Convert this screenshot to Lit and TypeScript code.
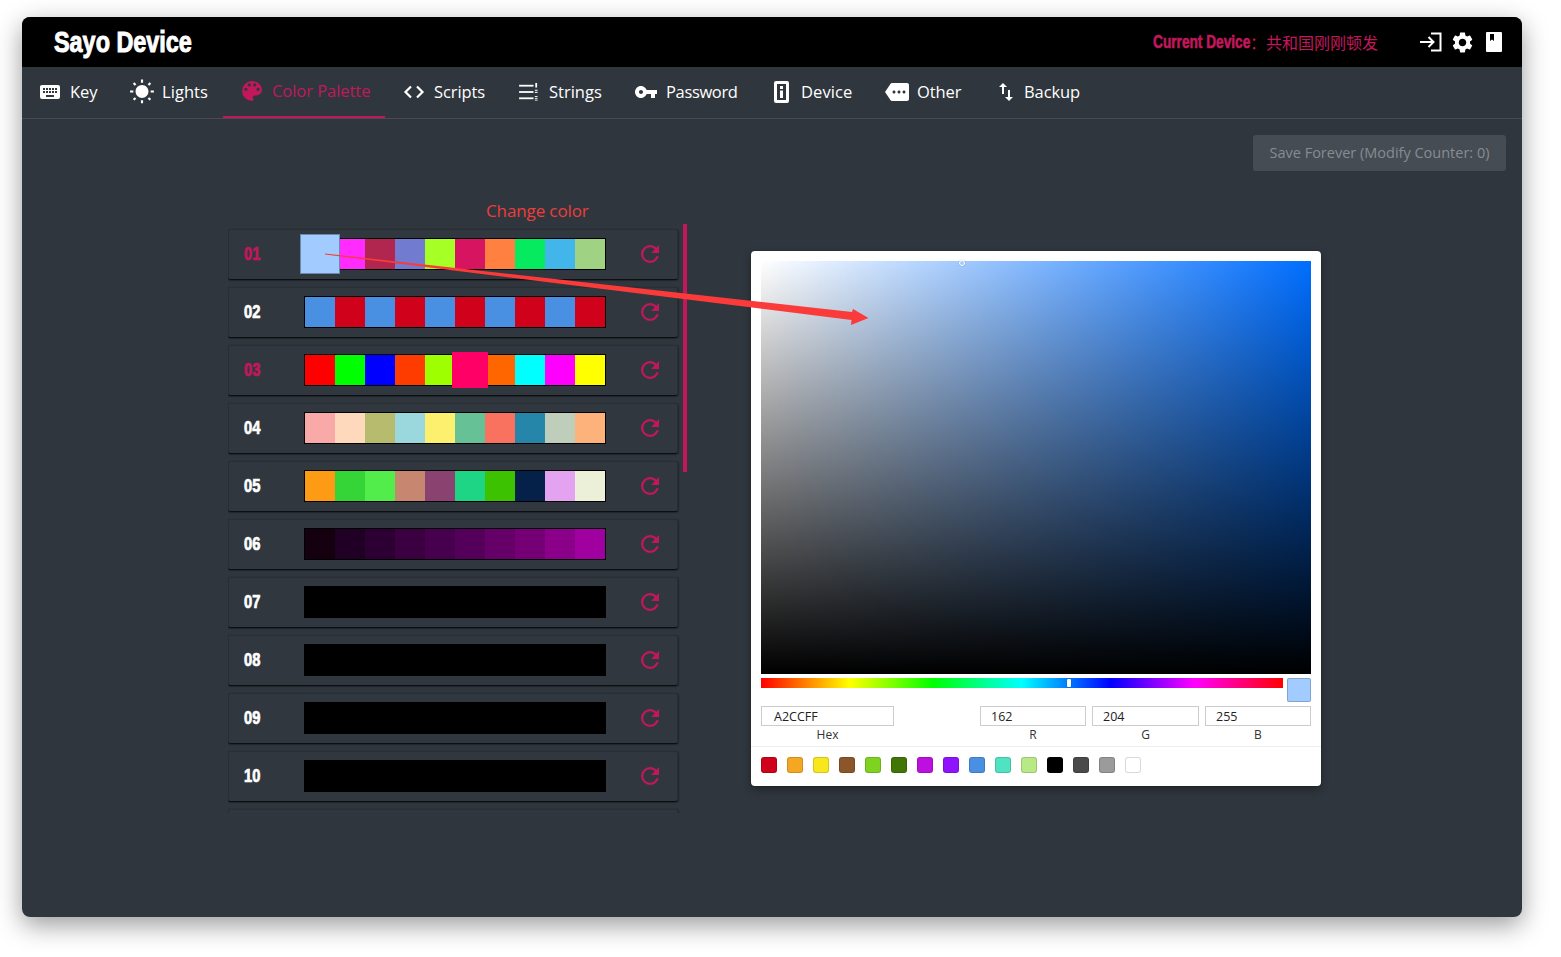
import { LitElement, html, css } from "lit";
import { customElement } from "lit/decorators.js";

const ic = (d: string, w: number, h: number, vb = "0 0 24 24") =>
  html`<svg class="ico" width=${w} height=${h} viewBox=${vb} fill="currentColor"><path fill-rule="evenodd" d=${d}></path></svg>`;

const ICONS: Record<string, any> = {
  key: ic("M19,10H17V8H19M19,13H17V11H19M16,10H14V8H16M16,13H14V11H16M16,17H8V15H16M7,10H5V8H7M7,13H5V11H7M8,11H10V13H8M8,8H10V10H8M11,11H13V13H11M11,8H13V10H11M20,5H4C2.89,5 2,5.89 2,7V17A2,2 0 0,0 4,19H20A2,2 0 0,0 22,17V7C22,5.89 21.1,5 20,5Z", 24, 24),
  sun: ic("M3.55,18.54L4.96,19.95L6.76,18.16L5.34,16.76M11,22.45C11.32,22.45 13,22.45 13,22.45V19.5H11M12,5.5A6,6 0 0,0 6,11.5A6,6 0 0,0 12,17.5A6,6 0 0,0 18,11.5C18,8.18 15.31,5.5 12,5.5M20,12.5H23V10.5H20M17.24,18.16L19.04,19.95L20.45,18.54L18.66,16.74M20.45,4.46L19.04,3.05L17.24,4.84L18.66,6.26M13,0.55H11V3.5H13M4,10.5H1V12.5H4M6.76,4.84L4.96,3.05L3.55,4.46L5.34,6.26L6.76,4.84Z", 26, 26),
  palette: ic("M17.5,12A1.5,1.5 0 0,1 16,10.5A1.5,1.5 0 0,1 17.5,9A1.5,1.5 0 0,1 19,10.5A1.5,1.5 0 0,1 17.5,12M14.5,8A1.5,1.5 0 0,1 13,6.5A1.5,1.5 0 0,1 14.5,5A1.5,1.5 0 0,1 16,6.5A1.5,1.5 0 0,1 14.5,8M9.5,8A1.5,1.5 0 0,1 8,6.5A1.5,1.5 0 0,1 9.5,5A1.5,1.5 0 0,1 11,6.5A1.5,1.5 0 0,1 9.5,8M6.5,12A1.5,1.5 0 0,1 5,10.5A1.5,1.5 0 0,1 6.5,9A1.5,1.5 0 0,1 8,10.5A1.5,1.5 0 0,1 6.5,12M12,3A9,9 0 0,0 3,12A9,9 0 0,0 12,21A1.5,1.5 0 0,0 13.5,19.5C13.5,19.11 13.35,18.76 13.11,18.5C12.88,18.23 12.73,17.88 12.73,17.5A1.5,1.5 0 0,1 14.23,16H16A5,5 0 0,0 21,11C21,6.58 16.97,3 12,3Z", 22, 22, "2 2 20 20"),
  code: html`<svg class="ico" width="22" height="16" viewBox="0 0 22 16" fill="none" stroke="currentColor" stroke-width="2.2"><path d="M8 2.5 2.5 8 8 13.5M14 2.5 19.5 8 14 13.5"></path></svg>`,
  strings: html`<svg class="ico" width="20" height="18" viewBox="0 0 22 20" fill="currentColor"><rect x="0" y="2" width="16" height="2"></rect><rect x="0" y="9" width="16" height="2"></rect><rect x="0" y="16" width="16" height="2"></rect><rect x="18" y="0" width="2" height="5"></rect><rect x="17.5" y="7.5" width="3" height="1.2"></rect><rect x="17.5" y="9.8" width="3" height="1.2"></rect><rect x="17.5" y="14.5" width="3" height="1"></rect><rect x="17.5" y="16.5" width="3" height="1"></rect><rect x="17.5" y="18.5" width="3" height="1"></rect></svg>`,
  pass: ic("M12.65 10C11.83 7.67 9.61 6 7 6c-3.31 0-6 2.69-6 6s2.69 6 6 6c2.61 0 4.83-1.67 5.65-4H17v4h4v-4h2v-4H12.65zM7 14c-1.1 0-2-.9-2-2s.9-2 2-2 2 .9 2 2-.9 2-2 2z", 24, 24, "0.5 0 23 24"),
  device: html`<svg class="ico" width="15" height="22" viewBox="0 0 15 22" fill="currentColor"><path fill-rule="evenodd" d="M2 0H13A2 2 0 0 1 15 2V20A2 2 0 0 1 13 22H2A2 2 0 0 1 0 20V2A2 2 0 0 1 2 0ZM3 3V19H12V3ZM6 5H9V8H6ZM6 9.500H9V17H6Z"></path></svg>`,
  other: ic("M22 3H7c-.69 0-1.23.35-1.59.88L0 12l5.41 8.11c.36.53.9.89 1.59.89h15c1.1 0 2-.9 2-2V5c0-1.1-.9-2-2-2zM9 13.5c-.83 0-1.5-.67-1.5-1.500s.67-1.5 1.5-1.5 1.5.67 1.5 1.5-.67 1.5-1.5 1.5zm5 0c-.83 0-1.5-.67-1.5-1.500s.67-1.5 1.5-1.5 1.5.67 1.5 1.5-.67 1.5-1.5 1.5zm5 0c-.83 0-1.5-.67-1.5-1.500s.67-1.5 1.5-1.5 1.5.67 1.5 1.5-.67 1.5-1.5 1.5z", 24, 24),
  backup: ic("M16 17.01V10h-2v7.01h-3L15 21l4-3.99h-3zM9 3L5 6.99h3V14h2V6.99h3L9 3z", 24, 24),
};

const TABS = [
  { id: "key", label: "Key", iconW: 20, gap: 10, w: 90, pad: 16, ls: -0.1 },
  { id: "sun", label: "Lights", iconW: 24, gap: 8, w: 109, pad: 16, ls: 0.05 },
  { id: "palette", label: "Color Palette", iconW: 20, gap: 10, w: 162, pad: 19, ls: -0.05 },
  { id: "code", label: "Scripts", iconW: 22, gap: 9, w: 118, pad: 18, ls: -0.1 },
  { id: "strings", label: "Strings", iconW: 20, gap: 10, w: 115, pad: 16, ls: 0 },
  { id: "pass", label: "Password", iconW: 23, gap: 9, w: 140, pad: 16, ls: -0.35 },
  { id: "device", label: "Device", iconW: 15, gap: 12, w: 111, pad: 16, ls: 0.1 },
  { id: "other", label: "Other", iconW: 24, gap: 8, w: 112, pad: 16, ls: -0.1 },
  { id: "backup", label: "Backup", iconW: 18, gap: 9, w: 120, pad: 16, ls: -0.1 },
].map((t, i) => ({ ...t, active: i === 2 }));

const BLACK = Array(10).fill("#000");
const ROWS: { colors: string[]; sel?: number; big?: boolean }[] = [
  { colors: ["#a2ccff", "#ff2bff", "#b0264f", "#717bd0", "#a6ff25", "#d6145f", "#ff8040", "#05ea5f", "#42b6ea", "#9fd283"], sel: 0, big: true },
  { colors: ["#4a90e2", "#d0021b", "#4a90e2", "#d0021b", "#4a90e2", "#d0021b", "#4a90e2", "#d0021b", "#4a90e2", "#d0021b"] },
  { colors: ["#ff0000", "#00ff00", "#0000ff", "#ff3c00", "#9dff00", "#ff0066", "#ff6600", "#00ffff", "#ff00ff", "#ffff00"], sel: 5 },
  { colors: ["#faa9a9", "#ffd9bc", "#b7bb6e", "#9ad8dd", "#fdf06e", "#66c296", "#f97260", "#2686aa", "#bfcebb", "#fdb27b"] },
  { colors: ["#fd9b14", "#36d537", "#53ed4b", "#c68670", "#8a4370", "#1ed585", "#3cc200", "#052149", "#e3a3f0", "#ecf0d8"] },
  { colors: ["#14000f", "#200025", "#2d0033", "#3a0040", "#47004d", "#54005a", "#640068", "#750075", "#8a0088", "#a000a0"] },
  { colors: BLACK }, { colors: BLACK }, { colors: BLACK }, { colors: BLACK },
];

const PRESETS = ["#d0021b", "#f5a623", "#f8e71c", "#8b572a", "#7ed321", "#417505", "#bd10e0", "#9013fe", "#4a90e2", "#50e3c2", "#b8e986", "#000000", "#4a4a4a", "#9b9b9b", "#ffffff"];

@customElement("app-root")
export class AppRoot extends LitElement {
  static styles = css`
    :host { display: block; padding: 17px 22px 40px; background: #fff; font-family: "Open Sans", "Noto Sans", sans-serif; --p: #c2185b; }
    .win { width: 1500px; height: 900px; border-radius: 8px; overflow: hidden; background: #2f363d; display: flex; flex-direction: column; }
    .shadow { width: 1500px; height: 900px; border-radius: 8px; box-shadow: 0 8px 26px rgba(0,0,0,.4); }
    .head { height: 50px; background: #000; display: flex; align-items: center; color: #fff; flex: none; }
    .logo { margin-left: 32px; font: bold 30px/1 "Liberation Sans", sans-serif; -webkit-text-stroke: 1px #fff; transform: scaleX(.78); transform-origin: left center; white-space: nowrap; }
    .cur { margin-left: auto; display: flex; align-items: center; color: var(--p); }
    .cur b { display: block; width: 97px; white-space: nowrap; font: bold 18px/1 "Liberation Sans", sans-serif; -webkit-text-stroke: .6px var(--p); transform: scaleX(.76); transform-origin: left center; }
    .cur span { font: 16px/1 "Noto Sans CJK SC", sans-serif; }
    .tools { display: flex; align-items: center; margin-left: 42px; margin-right: 20px; gap: 8px; }
    .book { margin-left: 3px; }
    .tabs { flex: none; display: flex; padding-left: 2px; border-bottom: 1px solid #484c50; box-sizing: border-box; height: 52px; color: #fff; }
    .tab { display: flex; align-items: center; flex: none; font-size: 16.500px; white-space: nowrap; height: 51px; padding-bottom: 2px; box-sizing: border-box; }
    .tab.on { color: var(--p); border-bottom: 2px solid var(--p); }
    .iconbox { display: flex; justify-content: center; align-items: center; }
    .ico { display: block; flex: none; }
    .body { flex: 1; position: relative; padding: 16px; min-height: 0; }
    .saverow { display: flex; justify-content: flex-end; }
    .save { height: 36px; width: 253px; padding-bottom: 2px; background: #454c53; color: #878c91; border-radius: 3px; font-size: 14.500px; display: flex; align-items: center; justify-content: center; white-space: nowrap; box-sizing: border-box; }
    .main { display: flex; margin: 53px 0 0 190px; align-items: flex-start; }
    .listwrap { position: relative; width: 460px; height: 589px; flex: none; }
    .list { height: 100%; overflow: hidden; padding-top: 5px; box-sizing: border-box; display: flex; flex-direction: column; gap: 8px; }
    .thumb { position: absolute; left: 455px; top: 0; width: 4px; height: 248px; background: var(--p); }
    .row { width: 450px; height: 50px; flex: none; box-sizing: border-box; display: flex; align-items: center; background: #30373e; box-shadow: 0 1px 2px #000, inset 0 1px 0 #292f35, inset 1px 0 0 #292f35, inset -1px 0 0 #292f35; border-radius: 2px; }
    .num { width: 76px; padding: 2px 0 0 16px; box-sizing: border-box; color: #fff; font: bold 17.500px/1 "Liberation Sans", sans-serif; -webkit-text-stroke: .7px currentColor; white-space: nowrap; }
    .num i { display: block; font-style: normal; transform: scaleX(.84); transform-origin: left center; }
    .num.on { color: var(--p); }
    .pal { display: flex; border: 1px solid #000; background: #000; flex: none; }
    .sw { width: 30px; height: 30px; flex: none; }
    .sw.sel { width: 36px; height: 36px; margin: -3px -3px; position: relative; z-index: 1; }
    .sw.big { width: 40px; height: 40px; margin: -5px -5px; box-sizing: border-box; border: 1.500px solid #6b89ab; position: relative; z-index: 1; }
    .reload { margin-left: 35px; color: var(--p); }
    .picker { margin: 27px 0 0 63px; width: 570px; height: 535px; background: #fff; border-radius: 4px; box-shadow: 0 0 2px rgba(0,0,0,.3), 0 4px 8px rgba(0,0,0,.3); color: #333; padding: 10px 10px 0; box-sizing: border-box; position: relative; flex: none; }
    .sat { height: 413px; position: relative; background: linear-gradient(to top, #000, rgba(0,0,0,0)), linear-gradient(to right, #fff, rgba(255,255,255,0)), #006eff; }
    .cursor { position: absolute; left: 198px; top: -1px; width: 6px; height: 6px; border-radius: 50%; box-sizing: border-box; border: 1px solid #fff; box-shadow: 0 0 1px rgba(0,0,0,.5); }
    .hue-row { display: flex; gap: 4px; margin-top: 4px; }
    .hue { width: 522px; height: 10px; position: relative; background: linear-gradient(to right, #f00 0%, #ff0 17%, #0f0 33%, #0ff 50%, #00f 67%, #f0f 83%, #f00 100%); }
    .hthumb { position: absolute; left: 306px; top: 1px; width: 4px; height: 8px; background: #fff; border-radius: 1px; box-shadow: 0 0 1px rgba(0,0,0,.6); }
    .prev { width: 24px; height: 24px; background: #a2ccff; border-radius: 2px; box-sizing: border-box; border: 1px solid rgba(0,0,0,.2); }
    .fields { display: flex; margin-top: 4px; }
    .f { display: flex; flex-direction: column; align-items: center; flex: none; }
    .f .inp { box-sizing: border-box; height: 20px; width: 100%; border: 1px solid #ccc; font-size: 12.500px; line-height: 20px; padding-left: 10px; color: #222; }
    .f .inp.hex { padding-left: 12px; }
    .f .lab { font-size: 12px; line-height: 14px; margin-top: 2px; color: #333; }
    .rule { height: 1px; background: #eee; margin: 4px -10px 0; }
    .presets { display: flex; gap: 10px; padding-top: 10px; }
    .pre { width: 16px; height: 16px; border-radius: 3px; box-sizing: border-box; border: 1px solid rgba(0,0,0,.15); }
    .anno { position: absolute; left: 0; top: 0; pointer-events: none; overflow: visible; z-index: 2; }
    .chg { position: absolute; left: 464px; top: 80px; color: #f03c3c; font-size: 17px; letter-spacing: -.12px; line-height: 24px; }
  `;

  render() {
    return html`
      <div class="shadow"><div class="win">
        <div class="head">
          <div class="logo">Sayo Device</div>
          <div class="cur"><b>Current Device</b><span>：</span><span>共和国刚刚顿发</span></div>
          <div class="tools">
            <svg class="ico" width="22" height="20" viewBox="0 0 22 20" fill="none" stroke="#fff" stroke-width="2"><path d="M0 10H13M8.500 5 13.500 10 8.500 15M11 1.500H20.500V18.500H11"></path></svg>
            <svg class="ico" width="25" height="25" viewBox="0 0 24 24" fill="#fff"><path fill-rule="evenodd" d="M19.14 12.94c.04-.3.06-.61.06-.94 0-.32-.02-.64-.07-.94l2.03-1.58c.18-.14.23-.41.12-.61l-1.92-3.32c-.12-.22-.37-.29-.59-.22l-2.39.96c-.5-.38-1.03-.7-1.62-.94l-.36-2.54c-.04-.24-.24-.41-.48-.41h-3.84c-.24 0-.43.17-.47.41l-.36 2.54c-.59.24-1.13.57-1.62.94l-2.39-.96c-.22-.08-.47 0-.59.22L2.74 8.87c-.12.21-.08.47.12.61l2.03 1.58c-.05.3-.09.63-.09.94s.02.64.07.94l-2.03 1.58c-.18.14-.23.41-.12.61l1.92 3.32c.12.22.37.29.59.22l2.39-.96c.5.38 1.03.7 1.62.94l.36 2.54c.05.24.24.41.48.41h3.84c.24 0 .44-.17.47-.41l.36-2.54c.59-.24 1.13-.56 1.62-.94l2.39.96c.22.08.47 0 .59-.22l1.92-3.32c.12-.22.07-.47-.12-.61l-2.01-1.58zM12 15.6c-1.98 0-3.6-1.62-3.6-3.6s1.62-3.6 3.6-3.6 3.6 1.62 3.6 3.6-1.62 3.6-3.6 3.6z"></path></svg>
            <svg class="ico book" width="16" height="20" viewBox="0 0 16 20" fill="#fff"><path fill-rule="evenodd" d="M1 0H15A1 1 0 0 1 16 1V19A1 1 0 0 1 15 20H1A1 1 0 0 1 0 19V1A1 1 0 0 1 1 0ZM4 2V9L6 7.500 8 9V2Z"></path></svg>
          </div>
        </div>
        <div class="tabs">
          ${TABS.map(t => html`<div class="tab ${t.active ? "on" : ""}" style="width:${t.w}px;padding-left:${t.pad}px;letter-spacing:${t.ls}px">
            <span class="iconbox" style="width:${t.iconW}px;margin-right:${t.gap}px">${ICONS[t.id]}</span>${t.label}
          </div>`)}
        </div>
        <div class="body">
          <div class="saverow"><div class="save">Save Forever (Modify Counter: 0)</div></div>
          <div class="main">
            <div class="listwrap">
              <div class="list">
                ${ROWS.map((r, i) => html`<div class="row">
                  <div class="num ${r.sel !== undefined ? "on" : ""}"><i>${String(i + 1).padStart(2, "0")}</i></div>
                  <div class="pal">${r.colors.map((c, j) => html`<div class="sw ${j === r.sel ? (r.big ? "big" : "sel") : ""}" style="background:${c}"></div>`)}</div>
                  <svg class="ico reload" width="18" height="18" viewBox="4 4 16 16" fill="currentColor"><path d="M17.65,6.35C16.2,4.9 14.21,4 12,4A8,8 0 0,0 4,12A8,8 0 0,0 12,20C15.73,20 18.84,17.45 19.73,14H17.65C16.83,16.33 14.61,18 12,18A6,6 0 0,1 6,12A6,6 0 0,1 12,6C13.66,6 15.14,6.69 16.22,7.78L13,11H20V4L17.65,6.35Z"></path></svg>
                </div>`)}
                <div class="row"></div>
              </div>
              <div class="thumb"></div>
            </div>
            <div class="picker">
              <div class="sat"><div class="cursor"></div></div>
              <div class="hue-row">
                <div class="hue"><div class="hthumb"></div></div>
                <div class="prev"></div>
              </div>
              <div class="fields">
                <div class="f" style="width:133px;margin-right:86px"><div class="inp hex">A2CCFF</div><div class="lab">Hex</div></div>
                <div class="f" style="width:106px;margin-right:6px"><div class="inp">162</div><div class="lab">R</div></div>
                <div class="f" style="width:107px;margin-right:6px"><div class="inp">204</div><div class="lab">G</div></div>
                <div class="f" style="width:106px"><div class="inp">255</div><div class="lab">B</div></div>
              </div>
              <div class="rule"></div>
              <div class="presets">${PRESETS.map(c => html`<div class="pre" style="background:${c}"></div>`)}</div>
            </div>
          </div>
          <div class="chg">Change color</div>
          <svg class="anno" width="1500" height="800" viewBox="22 118 1500 800">
            <polygon points="325,252.500 852,311 853,308 868.500,317 851,324 851.500,319 325,253.500" fill="#fb3a3a"></polygon>
          </svg>
        </div>
      </div></div>
    `;
  }
}
